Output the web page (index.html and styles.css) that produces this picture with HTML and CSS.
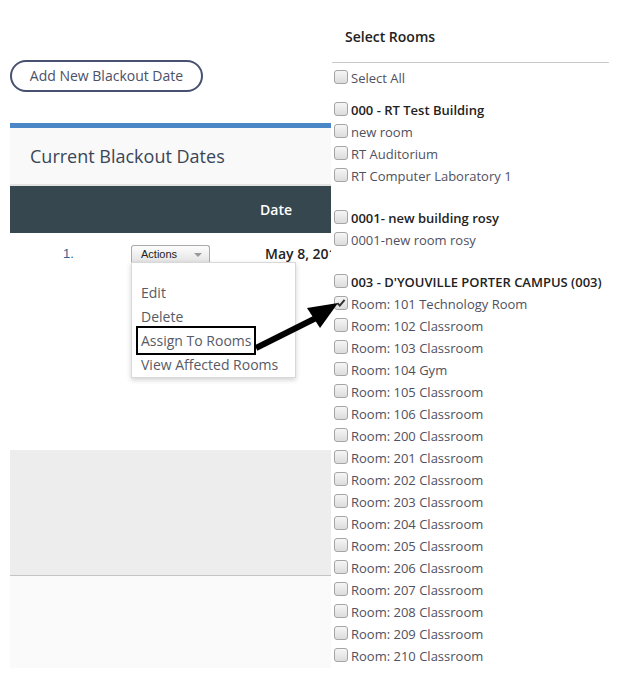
FILE: index.html
```html
<!DOCTYPE html>
<html>
<head>
<meta charset="utf-8">
<link rel="stylesheet" href="styles.css">
</head>
<body>
<div class="page">
  <div class="left">
    <button class="add-btn">Add New Blackout Date</button>
    <div class="panel">
      <div class="panel-title">Current Blackout Dates</div>
      <div class="table-head">
        <div class="th-num"></div>
        <div class="th-actions"></div>
        <div class="th-date">Date</div>
      </div>
      <div class="table-row">
        <div class="td-num">1.</div>
        <div class="td-actions">
          <div class="actions-btn">Actions<span class="caret"></span></div>
          <div class="dropdown">
            <div class="dd-item">Edit</div>
            <div class="dd-item">Delete</div>
            <div class="dd-item"><span class="boxed">Assign To Rooms</span></div>
            <div class="dd-item">View Affected Rooms</div>
          </div>
        </div>
        <div class="td-date">May 8, 2019</div>
      </div>
      <div class="grey-block"></div>
      <div class="light-block"></div>
    </div>
  </div>
  <div class="right">
    <div class="rooms-title">Select Rooms</div>
    <div class="rooms-sep"></div>
    <div class="row select-all"><span class="cb"></span>Select All</div>
    <div class="group">
      <div class="row bold"><span class="cb"></span>000 - RT Test Building</div>
      <div class="row"><span class="cb"></span>new room</div>
      <div class="row"><span class="cb"></span>RT Auditorium</div>
      <div class="row"><span class="cb"></span>RT Computer Laboratory 1</div>
    </div>
    <div class="group">
      <div class="row bold"><span class="cb"></span>0001- new building rosy</div>
      <div class="row"><span class="cb"></span>0001-new room rosy</div>
    </div>
    <div class="group">
      <div class="row bold"><span class="cb"></span>003 - D'YOUVILLE PORTER CAMPUS (003)</div>
      <div class="row"><span class="cb checked"><svg viewBox="0 0 12 12" width="12" height="12"><path d="M2.5 6.2 L4.8 8.6 L9.6 2.8" fill="none" stroke="#333" stroke-width="2"/></svg></span>Room: 101 Technology Room</div>
      <div class="row"><span class="cb"></span>Room: 102 Classroom</div>
      <div class="row"><span class="cb"></span>Room: 103 Classroom</div>
      <div class="row"><span class="cb"></span>Room: 104 Gym</div>
      <div class="row"><span class="cb"></span>Room: 105 Classroom</div>
      <div class="row"><span class="cb"></span>Room: 106 Classroom</div>
      <div class="row"><span class="cb"></span>Room: 200 Classroom</div>
      <div class="row"><span class="cb"></span>Room: 201 Classroom</div>
      <div class="row"><span class="cb"></span>Room: 202 Classroom</div>
      <div class="row"><span class="cb"></span>Room: 203 Classroom</div>
      <div class="row"><span class="cb"></span>Room: 204 Classroom</div>
      <div class="row"><span class="cb"></span>Room: 205 Classroom</div>
      <div class="row"><span class="cb"></span>Room: 206 Classroom</div>
      <div class="row"><span class="cb"></span>Room: 207 Classroom</div>
      <div class="row"><span class="cb"></span>Room: 208 Classroom</div>
      <div class="row"><span class="cb"></span>Room: 209 Classroom</div>
      <div class="row"><span class="cb"></span>Room: 210 Classroom</div>
    </div>
  </div>
  <svg class="arrow" width="619" height="679" viewBox="0 0 619 679">
    <line x1="256" y1="348" x2="316" y2="318" stroke="#000" stroke-width="6" stroke-linecap="butt"/>
    <polygon points="338,303 307,308 320,328" fill="#000"/>
  </svg>
</div>
</body>
</html>
```
FILE: styles.css
```css
html, body {
  margin: 0;
  padding: 0;
  background: #fff;
}
body {
  font-family: "Open Sans", "Liberation Sans", sans-serif;
  width: 619px;
  height: 679px;
  overflow: hidden;
}
.page {
  position: relative;
  display: flex;
  height: 679px;
}
.left {
  width: 321px;
  margin-left: 10px;
  overflow: hidden;
  flex: none;
}
.add-btn {
  display: block;
  margin-top: 60px;
  width: 193px;
  height: 32px;
  border: 2px solid #475170;
  border-radius: 16px;
  background: #fff;
  color: #4a5069;
  font-family: "Open Sans", sans-serif;
  font-size: 14px;
  padding: 0;
  text-align: center;
  line-height: 28px;
}
.panel {
  margin-top: 31px;
  width: 321px;
  border-top: 5px solid #4a87c6;
}
.panel-title {
  background: #f9f9f9;
  border-bottom: 2px solid #e3e3e3;
  box-sizing: border-box;
  height: 58px;
  padding-left: 20px;
  font-size: 18px;
  line-height: 56px;
  color: #3a4657;
}
.table-head {
  display: grid;
  grid-template-columns: 121px 129px 1fr;
  height: 47px;
  background: #37474f;
  align-items: center;
}
.th-date {
  color: #fff;
  font-weight: 600;
  font-size: 14px;
  white-space: nowrap;
}
.table-row {
  display: grid;
  grid-template-columns: 121px 134px 1fr;
  height: 217px;
  align-items: start;
}
.td-num {
  padding-top: 12px;
  padding-left: 53px;
  font-family: "Liberation Sans", Arial, sans-serif;
  font-size: 13px;
  line-height: 18px;
  color: #2f628f;
}
.td-actions {
  position: relative;
  padding-top: 12px;
}
.actions-btn {
  position: relative;
  width: 79px;
  height: 17px;
  box-sizing: border-box;
  border: 1px solid #aaaaaa;
  border-bottom: none;
  border-radius: 3px 3px 0 0;
  background: linear-gradient(#fdfdfd, #e4e4e4);
  font-family: "Liberation Sans", Arial, sans-serif;
  font-size: 11px;
  line-height: 16px;
  color: #222;
  padding-left: 9px;
}
.caret {
  position: absolute;
  right: 7px;
  top: 7px;
  border-left: 4px solid transparent;
  border-right: 4px solid transparent;
  border-top: 4px solid #9a9a9a;
}
.dropdown {
  position: absolute;
  left: 0;
  top: 29px;
  width: 165px;
  height: 116px;
  box-sizing: border-box;
  background: #fff;
  border: 1px solid #d8d8d8;
  box-shadow: 0 2px 5px rgba(0, 0, 0, 0.18);
  padding-top: 18px;
  z-index: 2;
}
.dd-item {
  padding-left: 9px;
  font-size: 14px;
  line-height: 24px;
  color: #575b66;
  white-space: nowrap;
}
.boxed {
  outline: 2px solid #000;
  outline-offset: 3px;
}
.td-date {
  padding-top: 10px;
  padding-left: 0;
  font-size: 14px;
  font-weight: 600;
  line-height: 22px;
  color: #222;
  white-space: nowrap;
}
.grey-block {
  height: 125px;
  background: #ededed;
  border-bottom: 1px solid #c4c4c4;
}
.light-block {
  height: 92px;
  background: #fafafa;
}
.right {
  flex: 1;
  background: #fff;
  padding-left: 3px;
  padding-right: 10px;
  position: relative;
  z-index: 1;
}
.rooms-title {
  padding-top: 27px;
  padding-left: 11px;
  height: 20px;
  padding-bottom: 15px;
  font-size: 14px;
  font-weight: 600;
  line-height: 20px;
  color: #222;
}
.rooms-sep {
  height: 1px;
  background: #c8c8c8;
  margin-left: -2px;
  border-radius: 1px;
}
.select-all {
  margin-top: 4px;
}
.group {
  margin-top: 10px;
}
.group + .group {
  margin-top: 20px;
}
.row {
  display: flex;
  align-items: center;
  height: 22px;
  font-size: 13px;
  color: #4f5160;
  white-space: nowrap;
}
.row.bold {
  font-weight: 600;
  color: #222;
}
.cb {
  display: inline-flex;
  align-items: center;
  justify-content: center;
  width: 12px;
  height: 12px;
  margin-right: 3px;
  margin-top: -2px;
  border: 1px solid #a5a5a5;
  border-radius: 3px;
  background: linear-gradient(#f6f6f6, #dcdcdc);
  flex: none;
}
.cb svg {
  display: block;
}
.arrow {
  position: absolute;
  left: 0;
  top: 0;
  z-index: 3;
  pointer-events: none;
}
```
